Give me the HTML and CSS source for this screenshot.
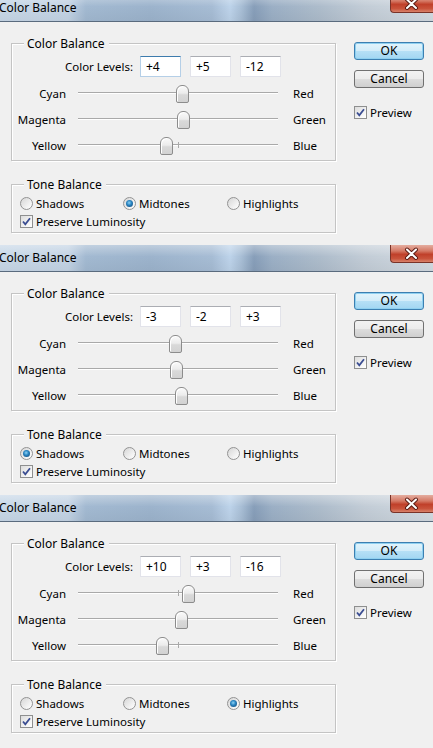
FILE: index.html
```html
<!DOCTYPE html>
<html>
  <head>
    <meta charset="UTF-8" />
    <title>Color Balance</title>
    <link rel="stylesheet" href="styles.css">
  </head>
  <body>
    <!-- Midtones -->
    <div class="dialog">
      <div class="titlebar">
        <span class="title">Color Balance</span>
        <span class="close">
          <svg width="43" height="18" viewBox="0 0 43 18">
            <path d="M17 4.5 L26 13 M26 4.5 L17 13" stroke="#5b1d15" stroke-width="4" stroke-linecap="round" />
            <path d="M17 4.5 L26 13 M26 4.5 L17 13" stroke="#fff" stroke-width="2" stroke-linecap="round" />
          </svg>
        </span>
      </div>
      <div class="content">
        <div class="groups">
          <div class="group balance">
            <span class="legend">Color Balance</span>
            <div class="levels">
              <span class="levels-label">Color Levels:</span>
              <input class="field focus" type="text" value="+4" readonly />
              <input class="field" type="text" value="+5" readonly />
              <input class="field" type="text" value="-12" readonly />
            </div>
            <div class="slider-row">
              <span class="left-label">Cyan</span>
              <div class="track"><span class="thumb" style="--v: 4"></span></div>
              <span class="right-label">Red</span>
            </div>
            <div class="slider-row">
              <span class="left-label">Magenta</span>
              <div class="track"><span class="thumb" style="--v: 5"></span></div>
              <span class="right-label">Green</span>
            </div>
            <div class="slider-row">
              <span class="left-label">Yellow</span>
              <div class="track"><span class="thumb" style="--v: -12"></span></div>
              <span class="right-label">Blue</span>
            </div>
          </div>
          <div class="group tone">
            <span class="legend">Tone Balance</span>
            <div class="tone-row">
              <span class="option"><span class="radio"></span>Shadows</span>
              <span class="option"><span class="radio on"></span>Midtones</span>
              <span class="option"><span class="radio"></span>Highlights</span>
            </div>
            <div class="check-row">
              <span class="check">
                <svg width="11" height="11" viewBox="0 0 11 11"><path d="M2 5.5 L4.3 8.3 L9 2.2" fill="none" stroke="#3a4d92" stroke-width="1.8" /></svg>
              </span>
              Preserve Luminosity
            </div>
          </div>
        </div>
        <div class="side">
          <button class="btn ok">OK</button>
          <button class="btn">Cancel</button>
          <div class="check-row preview">
            <span class="check">
              <svg width="11" height="11" viewBox="0 0 11 11"><path d="M2 5.5 L4.3 8.3 L9 2.2" fill="none" stroke="#3a4d92" stroke-width="1.8" /></svg>
            </span>
            Preview
          </div>
        </div>
      </div>
    </div>

    <!-- Shadows -->
    <div class="dialog">
      <div class="titlebar">
        <span class="title">Color Balance</span>
        <span class="close">
          <svg width="43" height="18" viewBox="0 0 43 18">
            <path d="M17 4.5 L26 13 M26 4.5 L17 13" stroke="#5b1d15" stroke-width="4" stroke-linecap="round" />
            <path d="M17 4.5 L26 13 M26 4.5 L17 13" stroke="#fff" stroke-width="2" stroke-linecap="round" />
          </svg>
        </span>
      </div>
      <div class="content">
        <div class="groups">
          <div class="group balance">
            <span class="legend">Color Balance</span>
            <div class="levels">
              <span class="levels-label">Color Levels:</span>
              <input class="field" type="text" value="-3" readonly />
              <input class="field" type="text" value="-2" readonly />
              <input class="field" type="text" value="+3" readonly />
            </div>
            <div class="slider-row">
              <span class="left-label">Cyan</span>
              <div class="track"><span class="thumb" style="--v: -3"></span></div>
              <span class="right-label">Red</span>
            </div>
            <div class="slider-row">
              <span class="left-label">Magenta</span>
              <div class="track"><span class="thumb" style="--v: -2"></span></div>
              <span class="right-label">Green</span>
            </div>
            <div class="slider-row">
              <span class="left-label">Yellow</span>
              <div class="track"><span class="thumb" style="--v: 3"></span></div>
              <span class="right-label">Blue</span>
            </div>
          </div>
          <div class="group tone">
            <span class="legend">Tone Balance</span>
            <div class="tone-row">
              <span class="option"><span class="radio on"></span>Shadows</span>
              <span class="option"><span class="radio"></span>Midtones</span>
              <span class="option"><span class="radio"></span>Highlights</span>
            </div>
            <div class="check-row">
              <span class="check">
                <svg width="11" height="11" viewBox="0 0 11 11"><path d="M2 5.5 L4.3 8.3 L9 2.2" fill="none" stroke="#3a4d92" stroke-width="1.8" /></svg>
              </span>
              Preserve Luminosity
            </div>
          </div>
        </div>
        <div class="side">
          <button class="btn ok">OK</button>
          <button class="btn">Cancel</button>
          <div class="check-row preview">
            <span class="check">
              <svg width="11" height="11" viewBox="0 0 11 11"><path d="M2 5.5 L4.3 8.3 L9 2.2" fill="none" stroke="#3a4d92" stroke-width="1.8" /></svg>
            </span>
            Preview
          </div>
        </div>
      </div>
    </div>

    <!-- Highlights -->
    <div class="dialog">
      <div class="titlebar">
        <span class="title">Color Balance</span>
        <span class="close">
          <svg width="43" height="18" viewBox="0 0 43 18">
            <path d="M17 4.5 L26 13 M26 4.5 L17 13" stroke="#5b1d15" stroke-width="4" stroke-linecap="round" />
            <path d="M17 4.5 L26 13 M26 4.5 L17 13" stroke="#fff" stroke-width="2" stroke-linecap="round" />
          </svg>
        </span>
      </div>
      <div class="content">
        <div class="groups">
          <div class="group balance">
            <span class="legend">Color Balance</span>
            <div class="levels">
              <span class="levels-label">Color Levels:</span>
              <input class="field" type="text" value="+10" readonly />
              <input class="field" type="text" value="+3" readonly />
              <input class="field" type="text" value="-16" readonly />
            </div>
            <div class="slider-row">
              <span class="left-label">Cyan</span>
              <div class="track"><span class="thumb" style="--v: 10"></span></div>
              <span class="right-label">Red</span>
            </div>
            <div class="slider-row">
              <span class="left-label">Magenta</span>
              <div class="track"><span class="thumb" style="--v: 3"></span></div>
              <span class="right-label">Green</span>
            </div>
            <div class="slider-row">
              <span class="left-label">Yellow</span>
              <div class="track"><span class="thumb" style="--v: -16"></span></div>
              <span class="right-label">Blue</span>
            </div>
          </div>
          <div class="group tone">
            <span class="legend">Tone Balance</span>
            <div class="tone-row">
              <span class="option"><span class="radio"></span>Shadows</span>
              <span class="option"><span class="radio"></span>Midtones</span>
              <span class="option"><span class="radio on"></span>Highlights</span>
            </div>
            <div class="check-row">
              <span class="check">
                <svg width="11" height="11" viewBox="0 0 11 11"><path d="M2 5.5 L4.3 8.3 L9 2.2" fill="none" stroke="#3a4d92" stroke-width="1.8" /></svg>
              </span>
              Preserve Luminosity
            </div>
          </div>
        </div>
        <div class="side">
          <button class="btn ok">OK</button>
          <button class="btn">Cancel</button>
          <div class="check-row preview">
            <span class="check">
              <svg width="11" height="11" viewBox="0 0 11 11"><path d="M2 5.5 L4.3 8.3 L9 2.2" fill="none" stroke="#3a4d92" stroke-width="1.8" /></svg>
            </span>
            Preview
          </div>
        </div>
      </div>
    </div>
  </body>
</html>
```

FILE: styles.css
```css
body {
  margin: 0;
  background: #f0f0f0;
  font-family: "Noto Sans", "Open Sans", sans-serif;
  font-size: 11.5px;
  color: #000;
  overflow: hidden;
}

.dialog {
  height: 250px;
}

.dialog:first-child {
  margin-top: -5px;
}

/* Aero title bar */
.titlebar {
  display: flex;
  align-items: flex-start;
  height: 26px;
  border-bottom: 1px solid #5a6b7e;
  background:
    linear-gradient(180deg, rgba(255, 255, 255, 0.35) 0, rgba(255, 255, 255, 0) 45%, rgba(0, 0, 0, 0.04) 100%),
    linear-gradient(90deg, #c7d7e7 0, #c3d3e4 68px, #a2b9d1 86px, #9cb3cc 150px, #a6bcd4 212px,
      #bdd3ea 230px, #a9bfd6 241px, #879eb9 254px, #9bafc5 272px, #adbccb 320px,
      #c2ccd6 365px, #d3dbe2 433px);
}

.title {
  line-height: 26px;
  margin-left: -1px;
  font-size: 12px;
}

.close {
  margin-left: auto;
  width: 43px;
  height: 18px;
  box-sizing: border-box;
  border: 1px solid #7a3328;
  border-top: none;
  border-right: none;
  border-radius: 0 0 0 4px;
  background: linear-gradient(180deg, #e4ada0 0, #d57a66 35%, #c0402a 55%, #c9533b 80%, #d8826a 100%);
}

.close svg {
  display: block;
  margin-left: -1px;
}

.content {
  display: flex;
  padding: 21px 0 0 11px;
}

.groups {
  display: flex;
  flex-direction: column;
  gap: 23px;
  width: 325px;
}

.group {
  position: relative;
  border: 1px solid #c4c4c4;
  box-shadow: inset 1px 1px 0 #fff, 1px 1px 0 #fff;
}

.legend {
  position: absolute;
  top: -9px;
  left: 12px;
  padding: 0 4px 0 3px;
  background: #f0f0f0;
  font-size: 12px;
  line-height: 17px;
}

.balance {
  padding: 12px 0 2px;
}

.levels {
  display: flex;
  align-items: center;
  gap: 9px;
  height: 21px;
  margin-bottom: 3px;
}

.levels-label {
  width: 121px;
  text-align: right;
  margin-right: -2px;
}

.field {
  width: 41px;
  height: 21px;
  box-sizing: border-box;
  margin: 0;
  padding: 0 5px;
  border: 1px solid #e2e3ea;
  border-top-color: #abadb3;
  background: #fff;
  font-family: inherit;
  font-size: 12px;
  color: #000;
  outline: none;
}

.field.focus {
  border-color: #b5cfe7;
  border-top-color: #3d7bad;
}

.slider-row {
  display: flex;
  align-items: center;
  height: 26px;
}

.left-label {
  width: 54px;
  text-align: right;
  margin-right: 12px;
}

.right-label {
  margin-left: 15px;
}

.track {
  position: relative;
  width: 200px;
  height: 0;
  border-top: 1px solid #a9a9a9;
  border-bottom: 1px solid #fff;
}

.track::before {
  content: "";
  position: absolute;
  left: 100px;
  top: -3px;
  width: 1px;
  height: 6px;
  background: #a9a9a9;
}

.thumb {
  position: absolute;
  top: -8px;
  left: calc(100px + var(--v) * 1px - 6px);
  width: 11px;
  height: 16px;
  border: 1px solid #8c8c8c;
  border-radius: 6px 6px 2px 2px;
  background: linear-gradient(180deg, #fafafa 0, #ececec 45%, #d9d9d9 55%, #d2d2d2 100%);
  box-shadow: inset 1px 1px 0 #fff;
}

.tone {
  padding: 9px 0 1px;
}

.tone-row {
  display: grid;
  grid-template-columns: 103px 104px auto;
  align-items: center;
  height: 18px;
  padding-left: 8px;
}

.option {
  display: flex;
  align-items: center;
}

.radio {
  position: relative;
  width: 11px;
  height: 11px;
  margin-right: 3px;
  border: 1px solid #939393;
  border-radius: 50%;
  background: linear-gradient(135deg, #d6d6d6 0, #f4f4f4 70%, #fff 100%);
}

.radio.on::after {
  content: "";
  position: absolute;
  left: 2px;
  top: 2px;
  width: 7px;
  height: 7px;
  border-radius: 50%;
  background: radial-gradient(circle at 45% 40%, #8fd3f5 0, #2b87c4 40%, #0f3e6b 100%);
}

.check-row {
  display: flex;
  align-items: center;
  height: 19px;
  padding-left: 8px;
}

.check {
  display: flex;
  align-items: center;
  justify-content: center;
  width: 11px;
  height: 11px;
  margin-right: 3px;
  border: 1px solid #8e8f8f;
  background: linear-gradient(135deg, #dcdcdc 0, #f6f6f6 70%, #fff 100%);
}

.side {
  display: flex;
  flex-direction: column;
  width: 70px;
  margin: -1px 0 0 18px;
}

.btn {
  height: 18px;
  margin: 0 0 10px;
  padding: 0;
  border: 1px solid #707070;
  border-radius: 3px;
  background: linear-gradient(180deg, #f2f2f2 0, #ebebeb 50%, #dddddd 51%, #cfcfcf 100%);
  font-family: inherit;
  font-size: 12px;
  line-height: 16px;
  color: #000;
}

.btn.ok {
  border-color: #3c7fb1;
  background: linear-gradient(180deg, #e3f4fc 0, #d2ecf9 50%, #b6e0f6 51%, #a2d6f2 100%);
  box-shadow: inset 0 0 0 1px #8fd0f0;
}

.preview {
  padding-left: 0;
  margin-top: 5px;
}
```
